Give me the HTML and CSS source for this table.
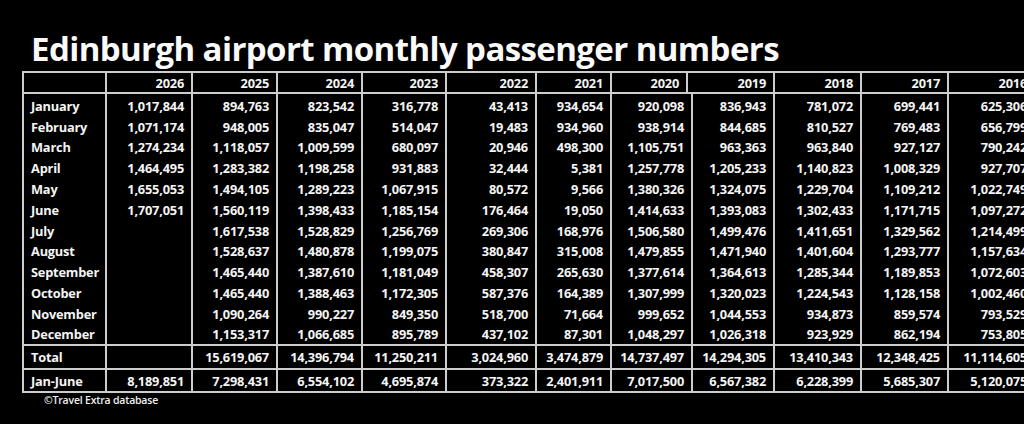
FILE: index.html
```html
<!DOCTYPE html>
<html lang="en">
<head>
<meta charset="utf-8">
<title>Edinburgh airport monthly passenger numbers</title>
<link rel="stylesheet" href="styles.css">
</head>
<body>
<h1 class="title">Edinburgh airport monthly passenger numbers</h1>
<div class="sheet">
  <table class="grid head">
    <colgroup>
      <col class="c-label"><col class="c-2026"><col class="c-2025"><col class="c-2024"><col class="c-2023"><col class="c-2022"><col class="c-2021"><col class="h-2020"><col class="h-2019"><col class="c-2018"><col class="c-2017"><col class="c-2016">
    </colgroup>
    <tr class="hrow">
      <th></th><th>2026</th><th>2025</th><th>2024</th><th>2023</th><th>2022</th><th>2021</th><th>2020</th><th>2019</th><th>2018</th><th>2017</th><th>2016</th>
    </tr>
  </table>
  <table class="grid body">
    <colgroup>
      <col class="c-label"><col class="c-2026"><col class="c-2025"><col class="c-2024"><col class="c-2023"><col class="c-2022"><col class="c-2021"><col class="c-2020"><col class="c-2019"><col class="c-2018"><col class="c-2017"><col class="c-2016">
    </colgroup>
    <tr class="mrow"><td>January</td><td>1,017,844</td><td>894,763</td><td>823,542</td><td>316,778</td><td>43,413</td><td>934,654</td><td>920,098</td><td>836,943</td><td>781,072</td><td>699,441</td><td>625,306</td></tr>
    <tr class="mrow"><td>February</td><td>1,071,174</td><td>948,005</td><td>835,047</td><td>514,047</td><td>19,483</td><td>934,960</td><td>938,914</td><td>844,685</td><td>810,527</td><td>769,483</td><td>656,799</td></tr>
    <tr class="mrow"><td>March</td><td>1,274,234</td><td>1,118,057</td><td>1,009,599</td><td>680,097</td><td>20,946</td><td>498,300</td><td>1,105,751</td><td>963,363</td><td>963,840</td><td>927,127</td><td>790,242</td></tr>
    <tr class="mrow"><td>April</td><td>1,464,495</td><td>1,283,382</td><td>1,198,258</td><td>931,883</td><td>32,444</td><td>5,381</td><td>1,257,778</td><td>1,205,233</td><td>1,140,823</td><td>1,008,329</td><td>927,707</td></tr>
    <tr class="mrow"><td>May</td><td>1,655,053</td><td>1,494,105</td><td>1,289,223</td><td>1,067,915</td><td>80,572</td><td>9,566</td><td>1,380,326</td><td>1,324,075</td><td>1,229,704</td><td>1,109,212</td><td>1,022,749</td></tr>
    <tr class="mrow"><td>June</td><td>1,707,051</td><td>1,560,119</td><td>1,398,433</td><td>1,185,154</td><td>176,464</td><td>19,050</td><td>1,414,633</td><td>1,393,083</td><td>1,302,433</td><td>1,171,715</td><td>1,097,272</td></tr>
    <tr class="mrow"><td>July</td><td></td><td>1,617,538</td><td>1,528,829</td><td>1,256,769</td><td>269,306</td><td>168,976</td><td>1,506,580</td><td>1,499,476</td><td>1,411,651</td><td>1,329,562</td><td>1,214,499</td></tr>
    <tr class="mrow"><td>August</td><td></td><td>1,528,637</td><td>1,480,878</td><td>1,199,075</td><td>380,847</td><td>315,008</td><td>1,479,855</td><td>1,471,940</td><td>1,401,604</td><td>1,293,777</td><td>1,157,634</td></tr>
    <tr class="mrow"><td>September</td><td></td><td>1,465,440</td><td>1,387,610</td><td>1,181,049</td><td>458,307</td><td>265,630</td><td>1,377,614</td><td>1,364,613</td><td>1,285,344</td><td>1,189,853</td><td>1,072,603</td></tr>
    <tr class="mrow"><td>October</td><td></td><td>1,465,440</td><td>1,388,463</td><td>1,172,305</td><td>587,376</td><td>164,389</td><td>1,307,999</td><td>1,320,023</td><td>1,224,543</td><td>1,128,158</td><td>1,002,460</td></tr>
    <tr class="mrow"><td>November</td><td></td><td>1,090,264</td><td>990,227</td><td>849,350</td><td>518,700</td><td>71,664</td><td>999,652</td><td>1,044,553</td><td>934,873</td><td>859,574</td><td>793,529</td></tr>
    <tr class="mrow last"><td>December</td><td></td><td>1,153,317</td><td>1,066,685</td><td>895,789</td><td>437,102</td><td>87,301</td><td>1,048,297</td><td>1,026,318</td><td>923,929</td><td>862,194</td><td>753,805</td></tr>
    <tr class="srow total"><td>Total</td><td></td><td>15,619,067</td><td>14,396,794</td><td>11,250,211</td><td>3,024,960</td><td>3,474,879</td><td>14,737,497</td><td>14,294,305</td><td>13,410,343</td><td>12,348,425</td><td>11,114,605</td></tr>
    <tr class="srow half"><td>Jan-June</td><td>8,189,851</td><td>7,298,431</td><td>6,554,102</td><td>4,695,874</td><td>373,322</td><td>2,401,911</td><td>7,017,500</td><td>6,567,382</td><td>6,228,399</td><td>5,685,307</td><td>5,120,075</td></tr>
  </table>
  <p class="credit">©Travel Extra database</p>
</div>
</body>
</html>
```

FILE: styles.css
```css
html, body {
  margin: 0;
  padding: 0;
  background: #000;
  overflow: hidden;
}
body {
  width: 1024px;
  height: 424px;
  color: #f4f4f4;
  font-family: "Open Sans", "Liberation Sans", sans-serif;
}
.title {
  margin: 0;
  padding: 29px 0 0 31px;
  height: 71px;
  box-sizing: border-box;
  font-size: 33px;
  line-height: 40px;
  font-weight: 700;
  letter-spacing: -0.6px;
  white-space: nowrap;
  color: #fafafa;
}
.sheet {
  padding-left: 22px;
}
.grid {
  border-collapse: collapse;
  table-layout: fixed;
  width: 1012px;
  font-size: 12.8px;
  font-weight: 700;
  letter-spacing: -0.2px;
}
.grid td, .grid th {
  border-left: 2px solid #cdcdcd;
  border-right: 2px solid #cdcdcd;
  padding: 0 7px 0 6px;
  text-align: right;
  white-space: nowrap;
  overflow: hidden;
  font-weight: 700;
}
.grid td:first-child {
  text-align: left;
  padding-left: 7px;
}
.c-label { width: 83px; }
.c-2026 { width: 86px; }
.c-2025 { width: 85px; }
.c-2024 { width: 85px; }
.c-2023 { width: 84px; }
.c-2022 { width: 90px; }
.c-2021 { width: 75px; }
.c-2020 { width: 81px; }
.c-2019 { width: 82px; }
.h-2020 { width: 76px; }
.h-2019 { width: 87px; }
.c-2018 { width: 87px; }
.c-2017 { width: 87px; }
.c-2016 { width: 87px; }
.hrow th {
  height: 19px;
  border-top: 2px solid #cdcdcd;
  border-bottom: 2px solid #cdcdcd;
}
.mrow td {
  height: 20.8px;
  line-height: 18px;
  vertical-align: bottom;
  padding-top: 0;
  padding-bottom: 0;
}
.mrow.last td {
  border-bottom: 2px solid #cdcdcd;
  padding-bottom: 1px;
  height: 19.8px;
}
.srow td {
  border-bottom: 2px solid #cdcdcd;
}
.total td { height: 22px; }
.half td { height: 20px; padding-top: 1px; }
.credit {
  margin: 0 0 0 22px;
  font-size: 10.5px;
  font-weight: 600;
  letter-spacing: -0.2px;
  color: #eee;
}
```
